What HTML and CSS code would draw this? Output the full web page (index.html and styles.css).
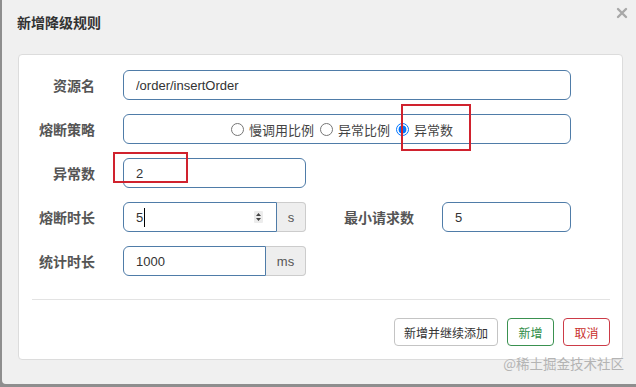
FILE: index.html
```html
<!DOCTYPE html>
<html lang="zh-CN">
<head>
    <meta charset="utf-8">
    <title>新增降级规则</title>
    <link rel="stylesheet" href="styles.css">
</head>
<body>

    <div class="dialog">
        <div class="dialog-header">
            <h4 class="dialog-title">新增降级规则</h4>
            <svg class="close" width="12" height="12" viewBox="0 0 12 12">
                <path d="M2 2 L10 10 M10 2 L2 10" stroke="#a8a8a8" stroke-width="2.4" stroke-linecap="round"/>
            </svg>
        </div>

        <div class="card">
            <form class="rule-form">
                <div class="row">
                    <span class="row-label">资源名</span>
                    <input class="field wide" type="text" value="/order/insertOrder">
                </div>

                <div class="row">
                    <span class="row-label">熔断策略</span>
                    <div class="field wide radios">
                        <label class="radio"><input type="radio" name="grade">慢调用比例</label>
                        <label class="radio"><input type="radio" name="grade">异常比例</label>
                        <label class="radio"><input type="radio" name="grade" checked>异常数</label>
                    </div>
                </div>

                <div class="row">
                    <span class="row-label">异常数</span>
                    <input class="field" type="text" value="2">
                </div>

                <div class="row">
                    <span class="row-label">熔断时长</span>
                    <div class="group">
                        <div class="field spin">
                            <span>5</span><span class="caret"></span>
                            <svg class="spinner" width="9" height="12" viewBox="0 0 9 12">
                                <rect width="9" height="12" rx="1" fill="#ececec"/>
                                <path d="M4.5 2 L7 5 L2 5 Z M4.5 10 L7 7 L2 7 Z" fill="#444"/>
                            </svg>
                        </div>
                        <span class="addon">s</span>
                    </div>
                    <span class="row-label">最小请求数</span>
                    <input class="field" type="text" value="5">
                </div>

                <div class="row">
                    <span class="row-label">统计时长</span>
                    <div class="group">
                        <input class="field" type="text" value="1000">
                        <span class="addon addon-ms">ms</span>
                    </div>
                </div>
            </form>

            <div class="divider"></div>

            <div class="actions">
                <button type="button" class="btn">新增并继续添加</button>
                <button type="button" class="btn btn-save">新增</button>
                <button type="button" class="btn btn-cancel">取消</button>
            </div>
        </div>

        <span class="watermark">@稀土掘金技术社区</span>

        <div class="mark mark-strategy"></div>
        <div class="mark mark-count"></div>
    </div>

</body>
</html>
```

FILE: styles.css
```css
body {
    margin: 0;
    height: 387px;
    background-color: #8e8e8e;
    font-family: 'Liberation Sans', 'Noto Sans CJK SC', sans-serif;
    overflow: hidden;
}

.dialog {
    position: relative;
    margin-left: 2px;
    height: 384px;
    background-color: #f0f0f0;
    border-bottom-left-radius: 4px;
}

.dialog-header {
    position: relative;
    padding: 14px 15px 23px;
}

.dialog-title {
    margin: 0;
    font-family: 'Noto Sans CJK SC', sans-serif;
    font-size: 14px;
    line-height: 17px;
    font-weight: bold;
    color: #333;
}

.close {
    position: absolute;
    top: 7px;
    right: 8px;
}

.card {
    margin: 0 13px 0 16px;
    padding: 15px 12px 13px 13px;
    background-color: #fff;
    border: 1px solid #dcdcdc;
    border-radius: 4px;
}

.rule-form {
    display: flex;
    flex-direction: column;
    gap: 14px;
}

.row {
    display: grid;
    grid-template-columns: 63px 183px 80px 129px;
    column-gap: 28px;
    align-items: center;
    height: 30px;
}

.row-label {
    text-align: right;
    font-family: 'Noto Sans CJK SC', sans-serif;
    font-size: 14px;
    font-weight: bold;
    color: #555;
    white-space: nowrap;
}

.field {
    box-sizing: border-box;
    height: 30px;
    padding: 0 12px;
    border: 1px solid #4f7ca8;
    border-radius: 6px;
    background-color: #fff;
    font-family: 'Liberation Sans', sans-serif;
    font-size: 13px;
    color: #333;
    outline: none;
    width: 100%;
}

.wide {
    grid-column: 2 / 5;
}

.radios {
    display: flex;
    justify-content: center;
    align-items: center;
    gap: 6px;
    padding-right: 22px;
}

.radio {
    display: flex;
    align-items: center;
    font-family: 'Noto Sans CJK SC', sans-serif;
    font-size: 13px;
    color: #444;
}

.radio input {
    margin: 0 5px 0 0;
    width: 13px;
    height: 13px;
}

.group {
    display: flex;
    height: 30px;
}

.group .field {
    flex: 1;
    min-width: 0;
    border-top-right-radius: 0;
    border-bottom-right-radius: 0;
}

.spin {
    display: flex;
    align-items: center;
}

.caret {
    width: 1px;
    height: 19px;
    margin-left: 1px;
    background-color: #000;
}

.spinner {
    margin-left: auto;
    margin-right: 1px;
}

.addon {
    box-sizing: border-box;
    width: 29px;
    display: flex;
    align-items: center;
    justify-content: center;
    background-color: #eee;
    border: 1px solid #ccc;
    border-left: none;
    border-radius: 0 4px 4px 0;
    font-size: 13px;
    color: #555;
}

.addon-ms {
    width: 40px;
}

.divider {
    margin-top: 23px;
    height: 1px;
    background-color: #e3e3e3;
}

.actions {
    display: flex;
    justify-content: flex-end;
    gap: 9px;
    margin-top: 18px;
}

.btn {
    height: 28px;
    min-width: 47px;
    padding: 0 9px;
    background-color: #fff;
    border: 1px solid #c4c4c4;
    border-radius: 4px;
    font-family: 'Noto Sans CJK SC', sans-serif;
    font-size: 12px;
    color: #333;
}

.btn-save {
    border-color: #3a9150;
    color: #2f8d46;
}

.btn-cancel {
    border-color: #cc3b47;
    color: #c9302c;
}

.watermark {
    position: absolute;
    right: 12px;
    bottom: 11px;
    font-family: 'Noto Sans CJK SC', sans-serif;
    font-size: 13.5px;
    color: #b4b4b4;
}

.mark {
    position: absolute;
    box-sizing: border-box;
    border: 2px solid #d0222e;
}

.mark-strategy {
    left: 399px;
    top: 104px;
    width: 70px;
    height: 47px;
}

.mark-count {
    left: 111px;
    top: 152px;
    width: 75px;
    height: 31px;
}
```
